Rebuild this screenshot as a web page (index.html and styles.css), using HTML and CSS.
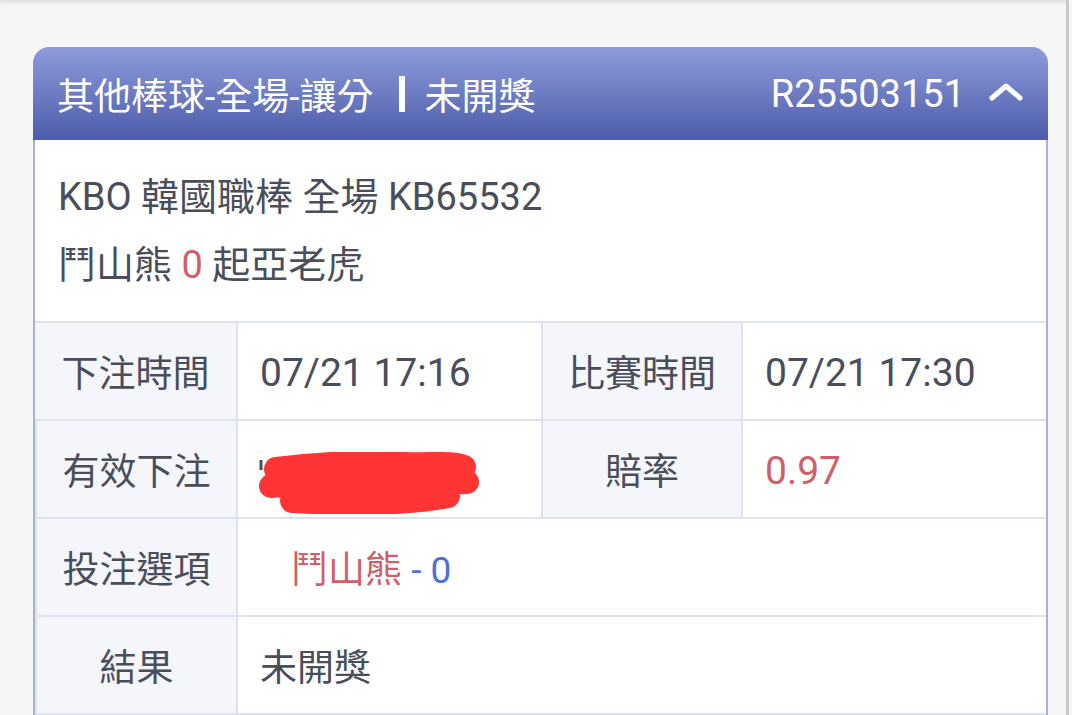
FILE: index.html
```html
<!DOCTYPE html>
<html lang="zh-Hant">
  <head>
    <meta charset="UTF-8" />
    <meta name="viewport" content="width=device-width, initial-scale=1.0" />
    <title>注單詳情</title>
    <link rel="stylesheet" href="styles.css">
  </head>
  <body>
    <div class="page">
      <div class="card">
        <div class="card-head">
          <div class="head-title">
            其他棒球-全場-讓分<span class="head-bar"></span>未開獎
          </div>
          <div class="head-right">
            <span>R25503151</span>
            <svg class="chevron" width="34" height="18" viewBox="0 0 34 18">
              <polyline points="3,15 17,3 31,15" fill="none" stroke="#fff" stroke-width="5" stroke-linecap="round" stroke-linejoin="round" />
            </svg>
          </div>
        </div>

        <div class="match">
          <div>KBO 韓國職棒 全場 KB65532</div>
          <div>鬥山熊 <span class="red">0</span> 起亞老虎</div>
        </div>

        <div class="detail">
          <div class="label">下注時間</div>
          <div class="value num">07/21 17:16</div>
          <div class="label">比賽時間</div>
          <div class="value num">07/21 17:30</div>

          <div class="label">有效下注</div>
          <div class="value">
            <svg class="scribble" width="222" height="62" viewBox="0 0 222 62">
              <path d="M3 8 L3 18" stroke="#4a4e5a" stroke-width="3" fill="none" />
              <path d="M18 17 C60 12 110 9 150 12 C175 13 195 10 206 15" stroke="#ff3434" stroke-width="24" stroke-linecap="round" fill="none" />
              <path d="M13 34 C70 30 140 32 209 30" stroke="#ff3434" stroke-width="24" stroke-linecap="round" fill="none" />
              <path d="M34 49 C90 52 150 52 190 44" stroke="#ff3434" stroke-width="24" stroke-linecap="round" fill="none" />
            </svg>
          </div>
          <div class="label">賠率</div>
          <div class="value num red">0.97</div>

          <div class="label">投注選項</div>
          <div class="value wide"><span class="pick"><span class="red">鬥山熊</span> <span class="blue">- 0</span></span></div>

          <div class="label">結果</div>
          <div class="value wide">未開獎</div>

          <div class="label"></div>
          <div class="value wide"></div>
        </div>
      </div>
    </div>
  </body>
</html>
```

FILE: styles.css
```css
html,
body {
  margin: 0;
  height: 100%;
  overflow: hidden;
}

body {
  font-family: Roboto, "Noto Sans CJK TC", sans-serif;
  background-color: #f6f6f6;
  color: #4a4e5a;
}

.page {
  width: 1069px;
  height: 100%;
  box-sizing: border-box;
  padding: 47px 21px 0 33px;
  border-right: 3px solid #c9c9c9;
  box-shadow: inset 0 6px 5px -4px #dcdcdc;
}

.card {
  width: 1015px;
  background: #fff;
  border-radius: 16px 16px 0 0;
  overflow: hidden;
}

.card-head {
  height: 93px;
  display: flex;
  align-items: center;
  justify-content: space-between;
  padding: 0 25px 0 24px;
  background: linear-gradient(to bottom, #8e9bdb, #4d5cab);
  color: #fff;
  font-size: 38px;
}

.head-title {
  display: flex;
  align-items: center;
  font-size: 37px;
}

.head-bar {
  display: inline-block;
  width: 6px;
  height: 36px;
  background: #fff;
  margin: 0 19px 0 26px;
}

.head-right {
  display: flex;
  align-items: center;
  gap: 24px;
}

.chevron {
  display: block;
  margin-top: -4px;
}

.match {
  padding: 23px 23px 22px;
  border-left: 2px solid #a9b0d9;
  border-right: 2px solid #a9b0d9;
  font-size: 38px;
  line-height: 68px;
}

.detail {
  display: grid;
  grid-template-columns: 201px 305px 200px 305px;
  grid-auto-rows: 98px;
  border-left: 2px solid #a9b0d9;
  border-right: 2px solid #a9b0d9;
  font-size: 37px;
}

.label,
.value {
  display: flex;
  align-items: center;
  border-top: 2px solid #dde2f0;
}

.label {
  justify-content: center;
  background: #f5f6fb;
}

.value {
  padding-left: 22px;
  border-left: 2px solid #dde2f0;
  background: #fff;
}

.num {
  font-size: 39px;
  padding-top: 4px;
}

.label + .value + .label {
  border-left: 2px solid #dde2f0;
}

.wide {
  grid-column: span 3;
}

.pick {
  padding-left: 31px;
}

.scribble {
  display: block;
  margin-left: -2px;
  margin-top: 28px;
}

.red {
  color: #cf5f69;
}

.blue {
  color: #4f6fd3;
}
```
